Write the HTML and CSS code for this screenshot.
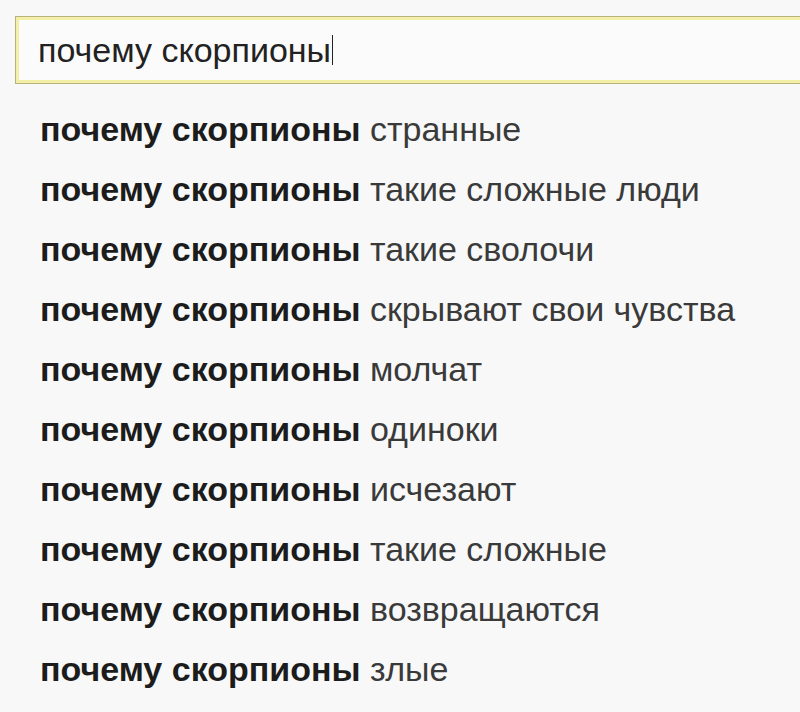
FILE: index.html
```html
<!DOCTYPE html>
<html>
    <head>
        <title>suggest</title>
        <meta charset="UTF-8">
        <meta name="viewport" content="width=device-width, initial-scale=1.0">
        <link rel="stylesheet" href="styles.css">
    </head>
    <body>
        <div class="search-box">
            <span class="query">почему скорпионы</span><span class="cursor"></span>
        </div>
        <ul class="suggest">
            <li><b>почему скорпионы</b> странные</li>
            <li><b>почему скорпионы</b> такие сложные люди</li>
            <li><b>почему скорпионы</b> такие сволочи</li>
            <li><b>почему скорпионы</b> скрывают свои чувства</li>
            <li><b>почему скорпионы</b> молчат</li>
            <li><b>почему скорпионы</b> одиноки</li>
            <li><b>почему скорпионы</b> исчезают</li>
            <li><b>почему скорпионы</b> такие сложные</li>
            <li><b>почему скорпионы</b> возвращаются</li>
            <li><b>почему скорпионы</b> злые</li>
        </ul>
    </body>
</html>
```
FILE: styles.css
```css
* {box-sizing: border-box;}

body {
    margin: 0;
    background-color: #f8f8f8;
    font-family: "Liberation Sans", Arial, sans-serif;
    font-size: 34px;
    color: #2b2b2b;
    overflow: hidden;
}

/* Search field with the yellow focus frame */
.search-box {
    display: flex;
    align-items: center;
    margin: 16px -20px 0 15px;
    height: 68px;
    padding-left: 22px;
    background-color: #fbfbfb;
    border: 1px solid #b8b37c;
    box-shadow: inset 0 0 0 3px #f4efa6;
}

.query {
    color: #222;
}

.cursor {
    width: 1px;
    height: 30px;
    margin-left: 1px;
    background-color: #222;
}

/* Suggestion rows */
.suggest {
    list-style: none;
    margin: 15px 0 0 0;
    padding: 0 0 0 40px;
}

.suggest li {
    line-height: 60px;
    white-space: nowrap;
    color: #3a3a3a;
}

.suggest b {
    color: #1c1c1c;
}
```
